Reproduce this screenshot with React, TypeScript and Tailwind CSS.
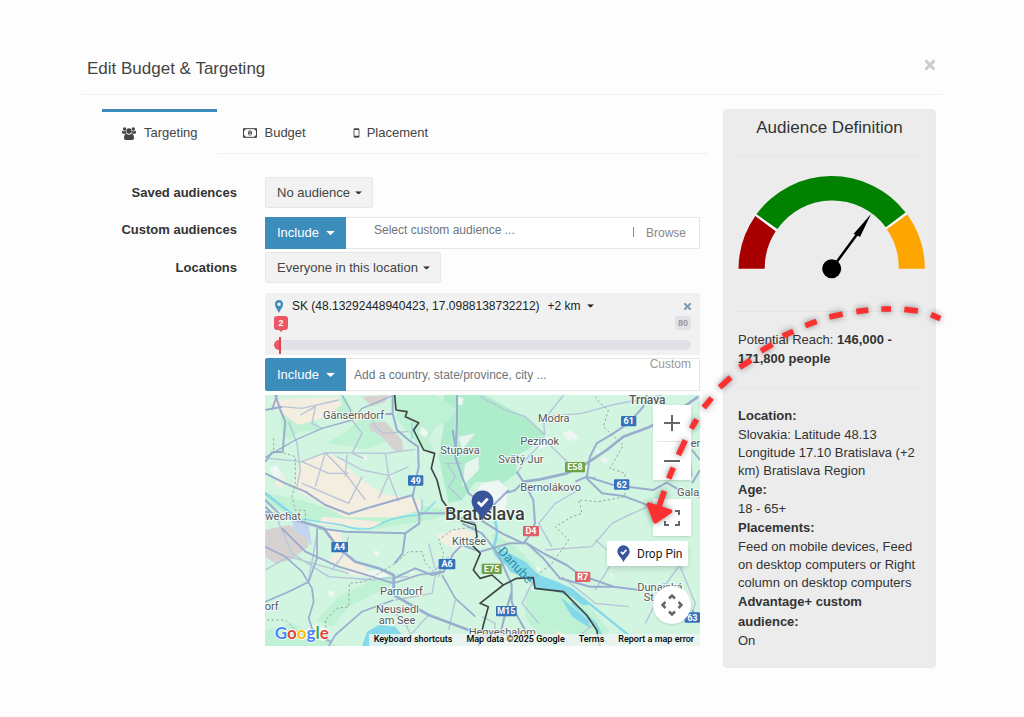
import type { ReactNode } from 'react'
import clsx from 'clsx'

const tabs = [
  { name: 'Targeting', icon: UsersIcon, active: true },
  { name: 'Budget', icon: MoneyIcon, active: false },
  { name: 'Placement', icon: MobileIcon, active: false },
]

const summary = [
  { term: 'Location:', text: 'Slovakia: Latitude 48.13 Longitude 17.10 Bratislava (+2 km) Bratislava Region' },
  { term: 'Age:', text: '18 - 65+' },
  { term: 'Placements:', text: 'Feed on mobile devices, Feed on desktop computers or Right column on desktop computers' },
  { term: 'Advantage+ custom audience:', text: 'On' },
]

const places = [
  { name: 'Gänserndorf', x: 183, y: 86 },
  { name: 'Stupava', x: 535, y: 193 },
  { name: 'Modra', x: 828, y: 97 },
  { name: 'Pezinok', x: 775, y: 165 },
  { name: 'Svätý Jur', x: 709, y: 219 },
  { name: 'Bernolákovo', x: 775, y: 302 },
  { name: 'Gala', x: 1245, y: 317 },
  { name: 'er', x: 1286, y: 172 },
  { name: 'wechat', x: 10, y: 391 },
  { name: 'Kittsee', x: 570, y: 465 },
  { name: 'Parndorf', x: 354, y: 615 },
  { name: 'Neusiedl', x: 342, y: 669 },
  { name: 'am See', x: 350, y: 703 },
  { name: 'orf', x: 8, y: 661 },
  { name: 'Hegyeshalom', x: 620, y: 738 },
  { name: 'Dunajská', x: 1126, y: 602 },
  { name: 'St', x: 1145, y: 634 },
]

const shields = [
  { name: '49', x: 438, y: 256, w: 46, color: '#3672bb' },
  { name: '61', x: 1077, y: 78, w: 46, color: '#3672bb' },
  { name: '62', x: 1056, y: 268, w: 46, color: '#3672bb' },
  { name: '63', x: 1268, y: 667, w: 46, color: '#3672bb' },
  { name: 'A4', x: 208, y: 456, w: 50, color: '#3672bb' },
  { name: 'A6', x: 530, y: 507, w: 50, color: '#3672bb' },
  { name: 'M15', x: 702, y: 648, w: 62, color: '#3672bb' },
  { name: 'E58', x: 909, y: 216, w: 60, color: '#6fa146' },
  { name: 'E75', x: 659, y: 521, w: 60, color: '#6fa146' },
  { name: 'D4', x: 783, y: 408, w: 48, color: '#dc6268' },
  { name: 'R7', x: 939, y: 545, w: 46, color: '#dc6268' },
]

function UsersIcon() {
  return (
    <svg className="h-[13px] w-[14px]" viewBox="0 0 42 39" fill="#444">
      <circle cx="8" cy="6" r="5" />
      <circle cx="34" cy="6" r="5" />
      <circle cx="21" cy="12" r="8" />
      <path d="M0 14q0-3 2-3 6 3 10 0-1 6 2 9H4q-4 0-4-3zM42 14q0-3-2-3-6 3-10 0 1 6-2 9h10q4 0 4-3z" />
      <path d="M6 33q0-12 7-13 8 6 16 0 7 1 7 13 0 6-5 6H11q-5 0-5-6z" />
    </svg>
  )
}

function MoneyIcon() {
  return (
    <svg className="h-[10px] w-[14px]" viewBox="0 0 42 30" fill="none">
      <path d="M1.500 2h39v26h-39z" stroke="#444" strokeWidth="3" />
      <path d="M2 2h6q0 6-6 6zM40 2h-6q0 6 6 6zM2 28h6q0-6-6-6zM40 28h-6q0-6 6-6z" fill="#444" />
      <ellipse cx="21" cy="15" rx="6" ry="8" fill="#444" />
      <path d="M19 12l2-2v10M18 20h7" stroke="#fff" strokeWidth="2" />
    </svg>
  )
}

function MobileIcon() {
  return (
    <svg className="h-[10px] w-[7px]" viewBox="0 0 21 30" fill="none">
      <rect x="3" y="2" width="15" height="26" rx="2" stroke="#444" strokeWidth="2.500" />
      <path d="M3 4h15M3 25h15" stroke="#444" strokeWidth="4" />
    </svg>
  )
}

function PinIcon({ className }: { className: string }) {
  return (
    <svg className={className} viewBox="0 0 40 54">
      <path d="M20 1a19 19 0 0 1 19 19c0 12-13 18-19 33C14 38 1 32 1 20A19 19 0 0 1 20 1z" fill="#38549b" />
      <path d="M12 21l6 6 11-12" fill="none" stroke="#fff" strokeWidth="5" />
    </svg>
  )
}

type DropdownProps = {
  id: string
  label: string
  value: string
  className: string
  caret: string
}

function Dropdown({ id, label, value, className, caret }: DropdownProps) {
  return (
    <div className="relative flex shrink-0">
      <select id={id} aria-label={label} className={clsx('appearance-none outline-none', className)}>
        <option>{value}</option>
      </select>
      <svg className={clsx('pointer-events-none absolute top-1/2 -translate-y-1/2', caret)} viewBox="0 0 8 4">
        <path d="M0 0h8L4 4z" fill="currentColor" />
      </svg>
    </div>
  )
}

function FormRow({ id, label, children, top }: { id: string; label: string; children: ReactNode; top?: boolean }) {
  return (
    <div className="grid grid-cols-[135px_minmax(0,1fr)] gap-x-7">
      <label htmlFor={id} className={clsx('text-right font-bold', top ? 'leading-[25px]' : 'leading-[31px]')}>
        {label}
      </label>
      <div className="flex min-w-0">{children}</div>
    </div>
  )
}

function Gauge() {
  return (
    <svg className="mt-[19px] w-full" viewBox="738 175 187 104">
      <path d="M755.800 215.300L776.200 230.600M906 213.300L886.200 228" stroke="#fff" strokeWidth="2" />
      <path d="M738.500 268.700A93.200 93.200 0 0 1 755.300 216L775.700 231.300A67 67 0 0 0 764.700 268.700z" fill="#a80000" />
      <path d="M756.400 214.300A93.200 93.200 0 0 1 905.600 212.600L885.900 227.300A67 67 0 0 0 777.400 229z" fill="#008200" />
      <path d="M907.300 214.500A93.200 93.200 0 0 1 924.900 268.700H898.700A67 67 0 0 0 886.800 229.200z" fill="#ffa500" />
      <path d="M831.700 268.700L858 233" stroke="#000" strokeWidth="2.500" />
      <path d="M871 214L853.500 234Q857 234.500 860 237z" />
      <circle cx="831.700" cy="268.700" r="9.500" />
    </svg>
  )
}

function MapDrawing() {
  return (
    <svg className="absolute inset-0 h-full w-full" viewBox="9 15 1305 753" preserveAspectRatio="xMidYMid slice" fontFamily="Roboto, sans-serif">
      <path d="M0 0h1330v780H0z" fill="#d1f5e1" />

      {/* woods */}
      <g fill="#bff1d5">
        <path d="M545 0H640L750 60L795 85L850 130L845 150L760 200L765 250L724 280L640 275L600 330L560 340L530 200L545 110z" fill="#aeedcb" />
        <path d="M400 0H500L590 60L560 90L520 110L500 150L520 190L480 175L440 130L405 90z" />
        <path d="M55 50L160 90L175 120L110 125L80 150L60 130z" />
        <path d="M150 40L250 20L285 80L250 90L190 80z" />
        <path d="M190 160Q260 130 320 60L400 130L380 150Q310 190 270 170z" />
        <path d="M10 310L120 330L270 380L460 345L600 365L480 395L320 420L130 390L10 345z" />
        <path d="M165 690L230 620L330 570L420 550L380 590L260 650L210 710z" />
        <path d="M10 720L90 700L230 768H10z" />
        <path d="M690 430L760 470L850 560L950 610L1040 720L1010 768L960 700L840 600L700 500z" />
        <path d="M790 600L900 610L1000 710V768H850L790 680z" />
      </g>
      <path d="M610 220L650 200V240L600 290zM590 140L640 130L600 180z" fill="#e8f5ee" />

      {/* farmland */}
      <g fill="#f3eee0">
        <path d="M115 220L190 185L240 210L270 245L330 290L370 315L440 320L480 335L475 360L400 382H250L190 350L110 305L95 280z" />
        <path d="M20 30L120 25L230 22L240 45L180 85L110 105L60 70z" />
        <path d="M185 415L240 425L240 490L310 530L325 560L270 555L200 510L230 480z" />
        <path d="M180 380L360 395L340 415L170 405z" />
        <path d="M40 240L70 260L60 300L40 280z" />
        <path d="M520 435L600 415L640 430L600 480L550 465z" />
        <path d="M880 720L920 740L900 760z" />
      </g>
      <g fill="#d6d2cf">
        <path d="M320 100L370 95L420 150L425 180L400 185L360 140L325 120z" />
        <path d="M300 20L380 15L370 35L330 50z" />
        <path d="M10 420L80 405L135 430L140 470L85 510L40 520L10 500z" />
      </g>
      <path d="M85 380L140 405L150 470L130 440L100 425z" fill="#c4d4f0" />
      <g fill="#eef7f3">
        <path d="M20 235l25-10 15 30-20 15zM300 200l12-5 5 12-12 6zM375 250l18 2-5 14-14-3zM480 110l20 20-12 12-15-14zM590 20l15 5-5 22-12-5zM660 280l50-10 30 30-10 60-60 20-40-60zM900 130l25-10 10 20-15 15zM815 150l50-10 5 25-40 12zM930 125l20 15-10 12-15-15zM1020 200l20 8-8 12-16-8z" />
        <path d="M200 600l18 4-4 16-15-6zM340 480l15 8-10 10-12-8zM440 530l20 20-15 8zM820 530l18 4-8 14zM1040 550l16 2-6 12zM880 480l12-6 4 14zM1000 180l14 4-6 12zM310 545l50-8 20 20-50 15zM150 705l40 8-5 40-30-5zM1030 470l14-4 4 14z" />
      </g>

      {/* water */}
      <g fill="#83d9ea">
        <path d="M300 768L315 725L350 705L400 710L420 735L435 768z" />
        <path d="M705 470L790 515L830 555L880 573L930 595L980 645L960 645L930 620L870 602L825 600L800 570L745 545L715 500z" />
        <path d="M895 620L930 650L980 690L985 715L930 680z" />
      </g>
      <g fill="none" stroke="#83d9ea" strokeLinecap="round">
        <path d="M110 385Q170 395 240 405Q310 430 350 405T470 375" strokeWidth="4" />
        <path d="M10 310L105 385M700 395Q710 430 698 460T730 520" strokeWidth="8" />
        <path d="M930 600L1000 655L1140 768M930 640L1000 700L1030 760" strokeWidth="7" />
        <path d="M450 100V145M480 330V360M960 265L1000 262M480 375L520 335" strokeWidth="4" />
      </g>

      {/* minor roads */}
      <g fill="none" stroke="#b7c4d9" strokeWidth="4" strokeLinejoin="round">
        <path d="M80 95L105 160L115 240L105 290M190 188L120 215L20 205M190 188L370 190L460 178M120 215L200 250L260 250M190 188L160 290M190 188L250 250L310 330M120 280L260 340L300 260M225 200L300 240L380 256L440 230M380 256L350 325M380 256L410 335M370 190L380 256M255 195L250 260M115 75L160 50L150 100L180 115M320 60L340 110L365 130L440 125M60 50L120 55L230 30M270 90L300 130L270 190L305 205" />
        <path d="M550 220H600M555 220L580 260L560 290L600 330M654 20L730 60L790 80L848 135M848 135L845 90L905 15M848 150L920 220M845 80L960 70L1050 45L1200 15M848 150L790 210L765 250M950 300L880 340L830 400L870 470M1110 370L1050 400L990 470L850 480M1180 340L1090 380M1230 480L1270 500L1200 600L1150 700" />
        <path d="M40 375L90 490L200 560L340 570M165 430L140 570M10 540L80 500L260 550M260 440L240 500L210 540M520 555L510 610L400 630M500 460L520 540L560 500M580 630L560 720M440 560L300 570M820 560L780 640L830 700M900 560L1000 640L1100 650M1000 600L1060 500L1000 450M500 675L450 730L430 768M380 650L430 700L460 768" />
        <path d="M1000 700L960 730L1060 768M1280 160L1290 260M1250 520L1300 640L1280 700M660 680L700 700L690 768" />
      </g>

      {/* main roads */}
      <g fill="none" stroke="#9aadce" strokeWidth="6" strokeLinejoin="round">
        <path d="M40 15L55 60L70 95L62 185L30 187L10 215M10 60L60 50M45 15L30 60" />
        <path d="M10 202L100 150L180 115L270 90L300 55L390 18M240 15L265 60L270 90" strokeWidth="4" />
        <path d="M10 250L70 280L130 305L190 345L260 372L330 350L400 330L452 315M392 15V70L405 120L440 150L468 170L470 230L452 320L472 375V400L430 430L422 490L398 520M370 72H392M10 330L60 380M10 350L50 390" />
        <path d="M585 15V100L580 200L600 260L620 310L690 360M572 120L580 170M470 370L560 370L640 400" />
        <path d="M784 275L834 268L914 250L974 220L1034 180L1084 140L1164 110L1230 75L1309 20" strokeWidth="8" />
        <path d="M974 265L984 200L1004 160L1054 130L1099 100L1144 50L1154 15M940 275L974 260L1054 285L1174 300L1214 278L1270 310L1314 320M974 265L1020 310L1084 318L1144 340L1200 375" />
        <path d="M764 245L784 275L814 330L819 400L800 440L784 460M730 310L760 300L784 275M654 340L680 360L740 300" />
        <path d="M10 365L120 395L185 415L230 475L280 515L350 535L395 555V615L500 675L620 720L680 730" strokeWidth="8" />
        <path d="M60 415L130 485L230 530L330 560L395 580M170 415L250 425L430 430M395 565L460 535L510 555L545 545L575 490L600 465L654 485L744 460L794 460L854 495L914 525L954 555L1054 590L1134 600" />
        <path d="M540 555L580 625L640 680M395 580L470 555L540 545M10 470L70 500L120 545L150 595L155 635L140 685L150 715L205 755M165 415L165 505L140 575L80 605L10 635M395 630L300 665L220 735L200 768" strokeWidth="5" />
        <path d="M794 460L844 505L894 565L984 590H1054M714 505L749 585V635L764 675L809 755M749 605L734 655L714 735M600 400L660 430L700 480L714 505M640 380L720 430L784 460" />
        <path d="M1290 180L1314 210M1314 240L1290 280M1290 660L1314 690" />
      </g>

      {/* regional and state borders */}
      <path d="M35 145V185L70 190L100 200V280L90 320L100 360L130 362V395M15 690L70 690L130 750M195 755L190 690L225 655L260 650L262 580L310 575L400 520L440 485H480L490 520L530 560L545 490L530 450L570 420L640 410M999 20L1014 40L1039 60L1024 110L1084 165L1044 235L1089 250V320L1010 335L950 330L960 370L930 380L880 410L920 450L870 520L820 560" fill="none" stroke="#98a69f" strokeWidth="3" strokeDasharray="7 7" />
      <path d="M398 15L402 60L435 65L430 80L470 98L455 120L485 180L518 190L508 235L525 270L540 330L555 350L590 390L640 405L645 440L630 465L655 490L634 540L654 565L690 555L724 585L764 565L814 563L819 595L904 605L974 675L1004 720L1014 768M724 585L654 640L679 650L664 705L650 768" fill="none" stroke="#3f4643" strokeWidth="5" strokeLinejoin="round" />

      {/* names, kept readable by a pale outline */}
      <g fontSize="33" fill="#55595c" stroke="#f2fbf6" strokeWidth="6" strokeLinejoin="round" paintOrder="stroke">
        {places.map((place) => (
          <text key={place.name} x={place.x} y={place.y}>{place.name}</text>
        ))}
        <text x="1101" y="41" fontSize="36" fontWeight="500">Trnava</text>
        <text x="549" y="390" fontSize="54" fontWeight="500" fill="#3a3e40">Bratislava</text>
      </g>
      <text transform="translate(706 486) rotate(47)" fontSize="39" fill="#2b8fa6">Danube</text>

      {shields.map((shield) => (
        <g key={shield.name}>
          <rect x={shield.x} y={shield.y} width={shield.w} height="31" rx="3" fill={shield.color} />
          <text x={shield.x + shield.w / 2} y={shield.y + 25} fontSize="27" fontWeight="700" fill="#fff" textAnchor="middle">
            {shield.name}
          </text>
        </g>
      ))}

      <text x="38" y="746" fontSize="51" fontFamily="Lato, sans-serif" fontWeight="700" stroke="#fff" strokeWidth="5" paintOrder="stroke">
        <tspan fill="#4285f4">G</tspan>
        <tspan fill="#ea4335">o</tspan>
        <tspan fill="#fbbc04">o</tspan>
        <tspan fill="#4285f4">g</tspan>
        <tspan fill="#34a853">l</tspan>
        <tspan fill="#ea4335">e</tspan>
      </text>
    </svg>
  )
}

function LocationMap() {
  const control = 'flex items-center justify-center bg-white text-[#666]'

  return (
    <div className="relative mt-1 aspect-[435/251] overflow-hidden font-[Roboto,sans-serif] text-black">
      <MapDrawing />
      <PinIcon className="absolute top-[38%] left-[206px] w-[23px]" />

      <div className="absolute top-[10px] right-[9px] w-[38px] divide-y divide-[#e6e6e6] bg-white px-1 shadow-sm">
        <button type="button" aria-label="Zoom in" className={clsx(control, 'h-[37px] w-full')}>
          <svg className="size-4" viewBox="0 0 16 16" stroke="currentColor" strokeWidth="2"><path d="M8 0v16M0 8h16" /></svg>
        </button>
        <button type="button" aria-label="Zoom out" className={clsx(control, 'h-[38px] w-full')}>
          <svg className="size-4" viewBox="0 0 16 16" stroke="currentColor" strokeWidth="2"><path d="M0 8h16" /></svg>
        </button>
      </div>
      <button type="button" aria-label="Toggle fullscreen" className={clsx(control, 'absolute top-[104px] right-[9px] h-[37px] w-[38px] shadow-sm')}>
        <svg className="size-4" viewBox="0 0 16 16" fill="none" stroke="currentColor" strokeWidth="2">
          <path d="M1 5V1h4M11 1h4v4M15 11v4h-4M5 15H1v-4" />
        </svg>
      </button>
      <button type="button" className="absolute top-[146px] right-[12px] flex h-[25px] w-[81px] items-center gap-[7px] rounded-xs bg-white pl-[10px] text-[12px] whitespace-nowrap text-[#222] shadow-md">
        <PinIcon className="w-[13px]" />
        Drop Pin
      </button>
      <button type="button" aria-label="Map camera controls" className={clsx(control, 'absolute right-[9px] bottom-[22px] size-[38px] rounded-full shadow-sm')}>
        <svg className="size-[22px]" viewBox="0 0 22 22" fill="none" stroke="currentColor" strokeWidth="2.500">
          <path d="M8 4.500L11 1.500l3 3M8 17.500l3 3 3-3M4.500 8L1.500 11l3 3M17.500 8l3 3-3 3" />
        </svg>
      </button>

      <div className="absolute right-0 bottom-0 flex h-3 items-center gap-[14px] bg-[#f0f5f3]/80 pr-[6px] pl-[5px] text-[9px] font-medium whitespace-nowrap">
        <button type="button">Keyboard shortcuts</button>
        <span>Map data ©2025 Google</span>
        <a href="#terms">Terms</a>
        <a href="#report">Report a map error</a>
      </div>
    </div>
  )
}

function LocationCard() {
  return (
    <div className="h-[62px] bg-[#f1f1f1] px-[9px] pt-[5px] text-[12px] text-[#222]">
      <div className="flex h-4 items-center">
        <svg className="mr-2 h-[13px] w-[10px]" viewBox="0 0 10 13">
          <path fillRule="evenodd" d="M5 0a4 4 0 0 1 4 4.500C9 6.500 7.500 8 5 13 2.500 8 1 6.500 1 4.500A4 4 0 0 1 5 0zm0 2.500a1.800 1.800 0 1 0 0 3.600 1.800 1.800 0 0 0 0-3.600z" fill="#3c8dbc" />
        </svg>
        <span className="mr-2 whitespace-nowrap">SK (48.13292448940423, 17.0988138732212)</span>
        <Dropdown id="radius" label="Radius" value="+2 km" className="pr-3" caret="right-0 w-[7px]" />
        <button type="button" aria-label="Remove location" className="ml-auto">
          <svg className="size-[7px]" viewBox="0 0 7 7" stroke="#7d9cb5" strokeWidth="2"><path d="M0 0l7 7M7 0L0 7" /></svg>
        </button>
      </div>
      <div className="mt-[2px] flex justify-between text-[9px] leading-[14px] font-bold">
        <output htmlFor="distance" className="relative w-[14px] rounded-[3px] bg-[#ed5565] text-center text-white">
          2
          <span className="absolute top-full left-1/2 -translate-x-1/2 border-x-2 border-t-2 border-x-transparent border-t-[#ed5565]" />
        </output>
        <span className="w-4 rounded-[3px] bg-[#e1e2e8] text-center text-[#999]">80</span>
      </div>
      <input
        id="distance"
        type="range"
        min="1"
        max="80"
        defaultValue="2"
        aria-label="Distance in km"
        className="mt-[10px] block h-[10px] w-full appearance-none rounded-md bg-[#e1e2e8] bg-[linear-gradient(#ed5565,#ed5565)] bg-[length:6px_100%] bg-no-repeat [&::-webkit-slider-thumb]:h-[17px] [&::-webkit-slider-thumb]:w-[2px] [&::-webkit-slider-thumb]:appearance-none [&::-webkit-slider-thumb]:bg-[#da4453]"
      />
    </div>
  )
}

function PointerArrow() {
  return (
    <svg
      className="pointer-events-none absolute top-[191px] -right-[14px] w-[310px] drop-shadow-[0_0_3px_rgba(0,0,0,0.45)]"
      viewBox="30 30 930 690"
      fill="none"
      stroke="#fb3030"
      strokeWidth="17"
    >
      <path d="M903 74L931 86M823 58L864 63M754 57H783M679 65L715 60M598 81L638 72M526 107L560 94M458 138L490 124M393 183L427 163M329 232L363 210M269 292L302 262M221 353L245 324M184 416L200 388M145 495L166 451M116 566L130 533M85 655L103 603" />
      <path d="M56 643L121 664L76 695z" fill="#fb3030" strokeWidth="12" strokeLinejoin="round" />
    </svg>
  )
}

export default function App() {
  const select = 'h-[31px] rounded-xs border border-[#e6e6e6] bg-[#f2f2f2] pr-[22px] pl-[11px] text-[13px] text-[#444]'
  const include = 'w-[81px] bg-[#3c8dbc] pl-3 text-[13px] text-white'

  return (
    <div className="min-h-screen bg-[#fdfdfd] px-[81px] pt-[43px] pb-12 font-['Liberation_Sans',Arial,sans-serif] text-[13px] text-[#333]">
      <header className="flex h-[52px] items-center justify-between border-b border-[#f1f1f1] px-[6px]">
        <h1 className="text-[17px] text-[#444]">Edit Budget &amp; Targeting</h1>
        <button type="button" aria-label="Close" className="mr-[2px] mb-2">
          <svg className="size-[10px]" viewBox="0 0 10 10" stroke="#ccc" strokeWidth="3"><path d="M0 0l10 10M10 0L0 10" /></svg>
        </button>
      </header>

      <div className="relative mt-[14px] mr-[7px] ml-[21px] flex items-start gap-[15px]">
        <main className="min-w-0 flex-1">
          {/* Tabs */}
          <nav className="flex h-[45px]">
            <button type="button" className="flex items-center gap-2 border-t-3 border-[#3c8dbc] px-5 text-[#444]">
              <UsersIcon />
              {tabs[0].name}
            </button>
            <div className="flex flex-1 border-b border-[#f1f1f1] pt-[3px]">
              {tabs.filter((tab) => !tab.active).map((tab) => (
                <button key={tab.name} type="button" className="ml-[5px] flex items-center gap-[7px] px-[21px] text-[#444]">
                  <tab.icon />
                  {tab.name}
                </button>
              ))}
            </div>
          </nav>

          {/* Targeting form */}
          <form className="mt-[23px] pr-2">
            <FormRow id="saved" label="Saved audiences">
              <Dropdown id="saved" label="Saved audiences" value="No audience" className={select} caret="right-[11px] w-[7px]" />
            </FormRow>

            <div className="mt-[9px]">
              <FormRow id="custom" label="Custom audiences" top>
                <Dropdown id="custom-mode" label="Custom audience mode" value="Include" className={clsx(include, 'h-8')} caret="right-[11px] w-[9px] text-white" />
                <div className="flex h-8 min-w-0 flex-1 border border-l-0 border-[#e6e6e6] bg-white pr-[13px] text-[12px] text-[#888]">
                  <input id="custom" placeholder="Select custom audience ..." className="h-[23px] min-w-0 flex-1 pl-7 outline-none placeholder:text-[#6c757d]" />
                  <span className="mt-[9px] mr-3 h-[10px] w-px bg-[#888]" />
                  <button type="button">Browse</button>
                </div>
              </FormRow>
            </div>

            <div className="mt-[3px]">
              <FormRow id="locations" label="Locations">
                <Dropdown id="locations" label="Locations" value="Everyone in this location" className={select} caret="right-[11px] w-[7px]" />
              </FormRow>
            </div>

            <div className="mt-[10px] ml-[163px]">
              <LocationCard />
              <div className="relative mt-[3px] flex h-[33px]">
                <Dropdown id="location-mode" label="Location mode" value="Include" className={clsx(include, 'rounded-l-xs')} caret="right-[11px] w-[9px] text-white" />
                <input aria-label="Add a location" placeholder="Add a country, state/province, city ..." className="min-w-0 flex-1 border border-l-0 border-[#e6e6e6] bg-white pl-2 text-[12px] outline-none placeholder:text-[#6c757d]" />
                <span className="absolute -top-px right-[9px] text-[12px] leading-[14px] text-[#999]">Custom</span>
              </div>
              <LocationMap />
            </div>
          </form>
        </main>

        {/* Audience summary */}
        <aside className="w-[213px] shrink-0 rounded-sm border border-[#e8ebeb] bg-[#ececec] pt-[6px] pr-[10px] pb-[17px] pl-[14px]">
          <h2 className="mr-1 text-center text-[17px] leading-6">Audience Definition</h2>
          <hr className="mt-[15px] mr-1 border-[#e0e5e5]" />
          <Gauge />
          <hr className="mt-8 mr-1 border-[#e0e5e5]" />
          <p className="mt-[18px] mr-1 leading-[19px]">
            Potential Reach: <b>146,000 - 171,800 people</b>
          </p>
          <hr className="mt-[19px] mr-1 border-[#e0e5e5]" />
          <dl className="mt-[18px] mr-1">
            {summary.map((item) => (
              <div key={item.term}>
                <dt className="leading-5 font-bold">{item.term}</dt>
                <dd className="leading-[18px]">{item.text}</dd>
              </div>
            ))}
          </dl>
        </aside>

        <PointerArrow />
      </div>
    </div>
  )
}
